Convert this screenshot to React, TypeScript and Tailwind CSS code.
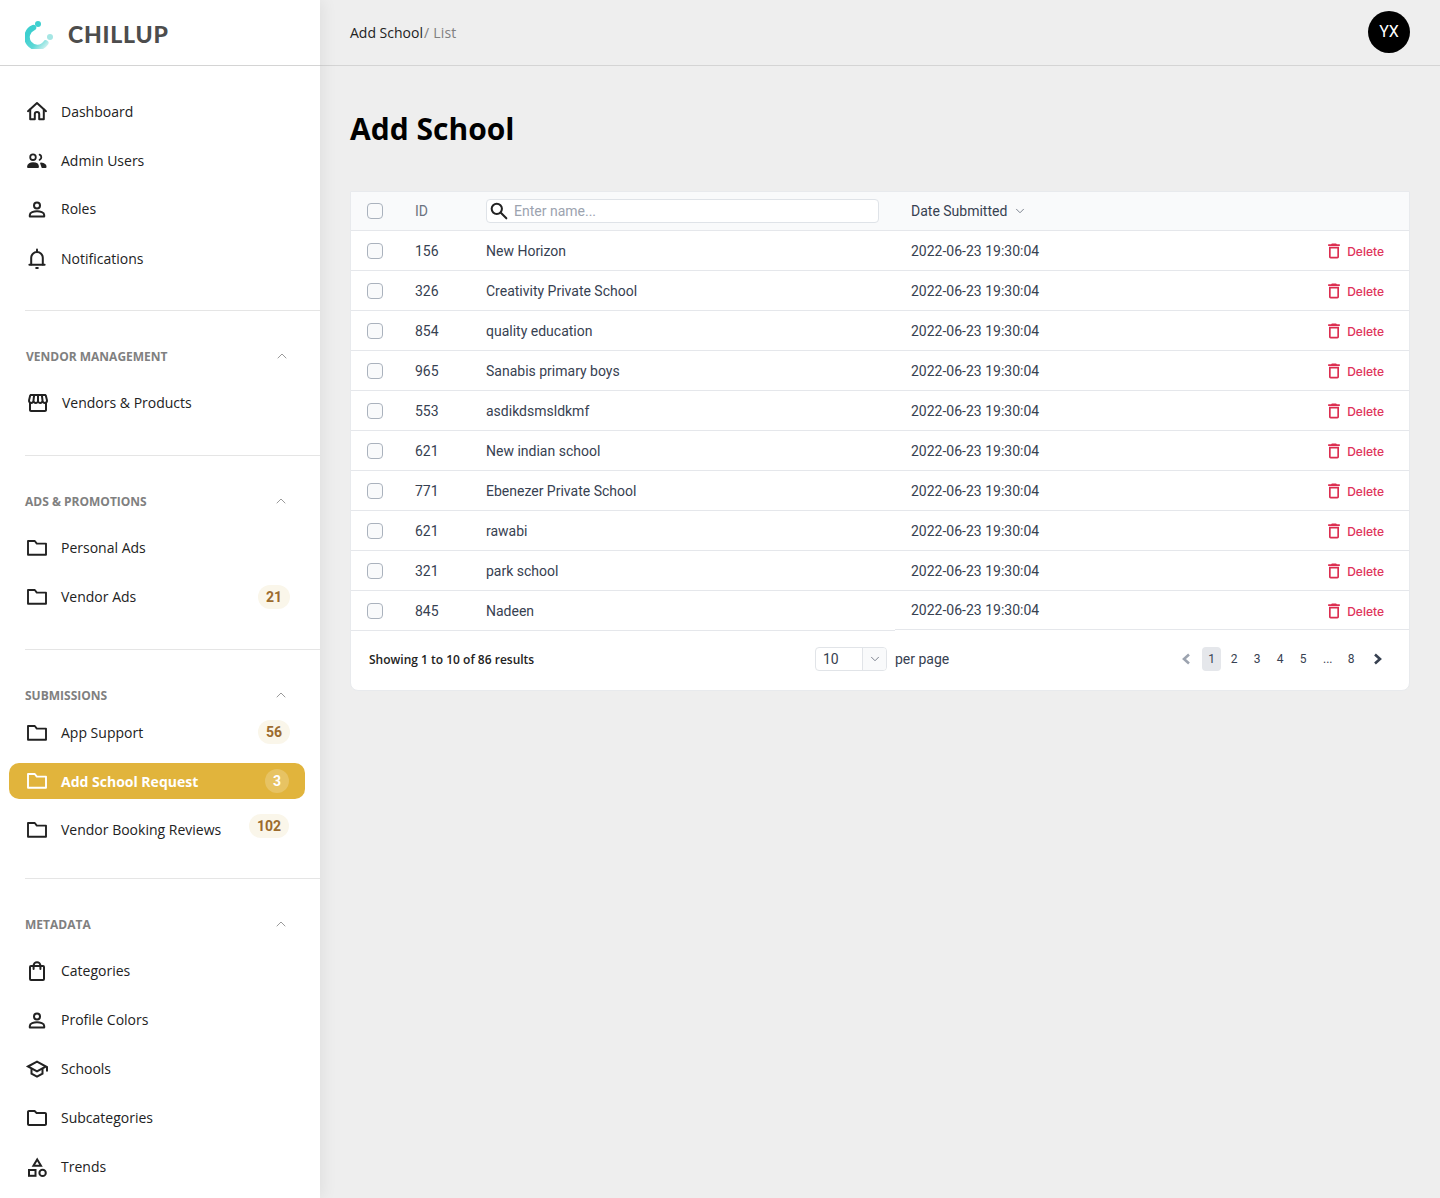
import React from "react";
import { MdOutlineStorefront, MdOutlineFolder, MdOutlineDelete } from "react-icons/md";
import { ChevronUp, ChevronDown } from "lucide-react";

type IconT = React.ComponentType<{ className?: string }>;

const base = {
  viewBox: "0 0 24 24",
  fill: "none",
  stroke: "currentColor",
  strokeWidth: 2,
  strokeLinecap: "round" as const,
  strokeLinejoin: "round" as const,
};

function HomeIcon({ className }: { className?: string }) {
  return (
    <svg {...base} className={className}>
      <path d="M3 11.2 12 3l9 8.2" />
      <path d="M5.2 9.6V19.3h4.6v-5.2a2.2 2.2 0 0 1 4.4 0v5.2h4.6V9.6" />
    </svg>
  );
}
function PeopleIcon({ className }: { className?: string }) {
  return (
    <svg {...base} className={className} strokeWidth={1.8}>
      <circle cx="8" cy="8.2" r="2.8" />
      <path d="M3 17.6c0-2.3 2.6-3.4 5-3.4s5 1.1 5 3.4v.5H3z" fill="currentColor" />
      <path d="M14.6 5.6a2.9 2.9 0 0 1 0 5.3" />
      <path d="M16 14.3c2.3.3 4.6 1.3 4.6 3.3v.5h-3.2z" fill="currentColor" />
    </svg>
  );
}
function PersonIcon({ className }: { className?: string }) {
  return (
    <svg {...base} className={className}>
      <circle cx="12" cy="8.6" r="3" />
      <path d="M4.8 19.5v-1.6c0-2.5 4-3.7 7.2-3.7s7.2 1.2 7.2 3.7v1.6z" />
    </svg>
  );
}
function BellIcon({ className }: { className?: string }) {
  return (
    <svg {...base} className={className}>
      <path d="M12 2.5v1.8" />
      <path d="M6.2 17.6v-6.8a5.8 5.8 0 0 1 11.6 0v6.8" />
      <path d="M4.4 17.8h15.2" />
      <path d="M11.2 21h1.6" />
    </svg>
  );
}
function FolderIcon({ className }: { className?: string }) {
  return (
    <svg {...base} className={className} strokeWidth={1.9}>
      <path d="M3 5h6.8l2 2.6H21v11.2H3z" />
    </svg>
  );
}
function BagIcon({ className }: { className?: string }) {
  return (
    <svg {...base} className={className}>
      <rect x="5" y="7" width="14" height="14" rx="1" />
      <path d="M8.6 10V6.6a3.4 3.4 0 0 1 6.8 0V10" />
    </svg>
  );
}
function SchoolIcon({ className }: { className?: string }) {
  return (
    <svg {...base} className={className} strokeLinecap="butt" strokeLinejoin="miter">
      <path d="M3 9.5 12 4.6l9 4.9-9 4.9z" />
      <path d="M6.5 12v4.6l5.5 3 5.5-3V12" />
      <path d="M22 9.5v5" />
    </svg>
  );
}
function CategoryIcon({ className }: { className?: string }) {
  return (
    <svg {...base} className={className} strokeLinecap="butt" strokeLinejoin="miter">
      <path d="M12.2 4.4 16 10.8H8.4z" />
      <rect x="4" y="15" width="6.5" height="5.8" />
      <circle cx="17.6" cy="17.9" r="3.2" />
    </svg>
  );
}
function SearchIcon({ className }: { className?: string }) {
  return (
    <svg {...base} className={className} strokeWidth={2.2}>
      <circle cx="9.6" cy="9.6" r="5.6" />
      <path d="m14 14 6 6" />
    </svg>
  );
}
function PageLeft({ className }: { className?: string }) {
  return (
    <svg {...base} className={className} strokeWidth={2.6} strokeLinecap="butt" strokeLinejoin="miter">
      <path d="M15 7.5 10 12l5 4.5" />
    </svg>
  );
}
function PageRight({ className }: { className?: string }) {
  return (
    <svg {...base} className={className} strokeWidth={2.6} strokeLinecap="butt" strokeLinejoin="miter">
      <path d="M10 7.5 15 12l-5 4.5" />
    </svg>
  );
}

function Logo() {
  return (
    <svg width="32" height="32" viewBox="0 0 32 32" className="mt-px ml-px shrink-0">
      <defs>
        <linearGradient id="lg" x1="0.2" y1="0.2" x2="1" y2="1">
          <stop offset="0" stopColor="#3dcfcf" />
          <stop offset="0.55" stopColor="#5ed8d6" />
          <stop offset="1" stopColor="#cdf1ef" />
        </linearGradient>
      </defs>
      <path d="M8.5 10.6 A10.3 10.3 0 1 0 20.8 26" fill="none" stroke="url(#lg)" strokeWidth="5.6" strokeLinecap="round" />
      <circle cx="13" cy="7" r="3" fill="#3fd0d0" />
      <circle cx="25" cy="20" r="3" fill="#a5e6e4" />
    </svg>
  );
}

function NavItem({
  icon: Icon,
  label,
  badge,
  active,
  className = "",
  badgeClass = "",
}: {
  icon: IconT;
  label: string;
  badge?: string;
  active?: boolean;
  className?: string;
  badgeClass?: string;
}) {
  return (
    <div
      className={
        "flex h-9 items-center " +
        (active ? "mr-[15px] ml-[9px] rounded-[10px] bg-[#e1b43c] pr-4 pl-4 text-white " : "pr-[31px] pl-[25px] text-[#222222] ") +
        className
      }
    >
      <Icon className="h-6 w-6 shrink-0" />
      <span className={"ml-3 text-sm " + (active ? "translate-y-px font-bold" : "")}>{label}</span>
      {badge && (
        <span
          className={
            "ml-auto flex h-6 items-center justify-center rounded-full font-['Roboto',sans-serif] text-sm font-bold " +
            (active ? "w-6 bg-white/20 text-white " : "min-w-8 bg-[#faf6ea] px-2 text-[#9c6b2e] ") +
            badgeClass
          }
        >
          {badge}
        </span>
      )}
    </div>
  );
}

function SectionHead({ title, shifted }: { title: string; shifted?: boolean }) {
  return (
    <div className={"mt-9 flex h-5 items-center justify-between " + (shifted ? "pr-[30px] pl-[26px]" : "pr-[31px] pl-[25px]")}>
      <span className="text-xs font-bold text-[#808080]">{title}</span>
      <ChevronUp className="h-4 w-4 -translate-y-px stroke-[1.5] text-[#9a9a9a]" />
    </div>
  );
}

function Sidebar() {
  return (
    <aside className="relative z-10 flex h-full w-80 shrink-0 flex-col overflow-hidden bg-white font-['Open_Sans',sans-serif] shadow-[4px_0_14px_rgba(0,0,0,0.06)]">
      <div className="flex h-[66px] shrink-0 items-center border-b border-[#d4d4d4] pl-6">
        <Logo />
        <span className="mt-[3px] ml-[11px] font-['Lato',sans-serif] text-[23px] font-black tracking-[0.8px] text-[#4d4d4d]">CHILLUP</span>
      </div>
      <nav className="flex flex-col">
        <NavItem icon={HomeIcon} label="Dashboard" className="mt-7" />
        <NavItem icon={PeopleIcon} label="Admin Users" className="mt-[13px]" />
        <NavItem icon={PersonIcon} label="Roles" className="mt-3" />
        <NavItem icon={BellIcon} label="Notifications" className="mt-[14px]" />
        <div className="mt-[33px] ml-[25px] h-px bg-[#e5e5e5]" />

        <SectionHead title="VENDOR MANAGEMENT" shifted />
        <NavItem icon={MdOutlineStorefront} label="Vendors & Products" className="mt-[18px] ml-px" />
        <div className="mt-[34px] ml-[25px] h-px bg-[#e5e5e5]" />

        <SectionHead title="ADS & PROMOTIONS" />
        <NavItem icon={FolderIcon} label="Personal Ads" className="mt-[18px]" />
        <NavItem icon={FolderIcon} label="Vendor Ads" badge="21" className="mt-[13px]" badgeClass="translate-x-px" />
        <div className="mt-[34px] ml-[25px] h-px bg-[#e5e5e5]" />

        <SectionHead title="SUBMISSIONS" />
        <NavItem icon={FolderIcon} label="App Support" badge="56" className="mt-[9px]" badgeClass="translate-x-px -translate-y-px" />
        <NavItem icon={FolderIcon} label="Add School Request" badge="3" active className="mt-3" />
        <NavItem icon={FolderIcon} label="Vendor Booking Reviews" badge="102" className="mt-[13px]" badgeClass="-translate-y-1" />
        <div className="mt-[30px] ml-[25px] h-px bg-[#e5e5e5]" />

        <SectionHead title="METADATA" />
        <NavItem icon={BagIcon} label="Categories" className="mt-[18px]" />
        <NavItem icon={PersonIcon} label="Profile Colors" className="mt-[13px]" />
        <NavItem icon={SchoolIcon} label="Schools" className="mt-[13px]" />
        <NavItem icon={MdOutlineFolder} label="Subcategories" className="mt-[13px]" />
        <NavItem icon={CategoryIcon} label="Trends" className="mt-[13px]" />
      </nav>
    </aside>
  );
}

const rows: [string, string][] = [
  ["156", "New Horizon"],
  ["326", "Creativity Private School"],
  ["854", "quality education"],
  ["965", "Sanabis primary boys"],
  ["553", "asdikdsmsldkmf"],
  ["621", "New indian school"],
  ["771", "Ebenezer Private School"],
  ["621", "rawabi"],
  ["321", "park school"],
  ["845", "Nadeen"],
];

function Check() {
  return <span className="block h-4 w-4 rounded border border-[#aab2bd] bg-[#f9fafb]" />;
}

function DeleteAction({ className = "" }: { className?: string }) {
  return (
    <span className={"ml-auto flex items-center pr-[25px] text-[#e0325a] " + className}>
      <MdOutlineDelete className="h-5 w-5 text-[#dc2d50]" />
      <span className="ml-[3px] translate-y-px font-['Inter',sans-serif] text-xs font-medium">Delete</span>
    </span>
  );
}

function Row({ id, name, last }: { id: string; name: string; last: boolean }) {
  if (last) {
    return (
      <div className="flex h-10 items-start">
        <div className="flex h-10 w-[544px] shrink-0 items-center border-b border-[#e5e7eb] pl-4">
          <Check />
          <span className="ml-8 w-[71px]">{id}</span>
          <span>{name}</span>
        </div>
        <div className="flex h-[39px] flex-1 items-center border-b border-[#e5e7eb] pl-4">
          <span>2022-06-23 19:30:04</span>
          <DeleteAction className="translate-y-px" />
        </div>
      </div>
    );
  }
  return (
    <div className="flex h-10 items-center border-b border-[#e5e7eb]">
      <div className="flex w-[544px] shrink-0 items-center pl-4">
        <Check />
        <span className="ml-8 w-[71px]">{id}</span>
        <span>{name}</span>
      </div>
      <span className="pl-4">2022-06-23 19:30:04</span>
      <DeleteAction />
    </div>
  );
}

function Table() {
  return (
    <div className="mt-[41px] w-[1060px] rounded-b-lg border border-[#e8eaed] bg-white font-['Roboto',sans-serif] text-sm text-[#374151]">
      <div className="flex h-[39px] items-center border-b border-[#e5e7eb] bg-[#f9fafb] pl-4">
        <Check />
        <span className="ml-8 w-[71px] text-[#6b7280]">ID</span>
        <div className="flex h-6 w-[393px] items-center rounded border border-[#dfe3e8] bg-white pl-px">
          <SearchIcon className="h-[22px] w-[22px] text-[#222222]" />
          <span className="ml-1 text-[#9ca3af]">Enter name...</span>
        </div>
        <span className="ml-8">Date Submitted</span>
        <ChevronDown className="ml-[6px] h-3.5 w-3.5 stroke-[1.5] text-[#6b7280]" />
      </div>
      {rows.map((r, i) => (
        <Row key={i} id={r[0]} name={r[1]} last={i === rows.length - 1} />
      ))}
      <div className="flex h-[59px] items-center pb-[3px] pl-[18px]">
        <span className="w-[446px] translate-y-px font-['Open_Sans',sans-serif] text-xs font-semibold text-[#222222]">Showing 1 to 10 of 86 results</span>
        <div className="flex h-6 w-[72px] overflow-hidden rounded border border-[#e1e4e8]">
          <span className="flex-1 pl-[7px] leading-[22px]">10</span>
          <span className="flex w-6 items-center justify-center border-l border-[#e1e4e8] bg-[#f9fafb]">
            <ChevronDown className="h-3.5 w-3.5 stroke-[1.5] text-[#6b7280]" />
          </span>
        </div>
        <span className="ml-2">per page</span>
        <div className="ml-auto flex items-center pr-5 text-xs">
          <PageLeft className="h-6 w-6 text-[#9ca3af]" />
          <span className="ml-1 flex h-6 w-[19px] items-center justify-center rounded bg-[#e5e7eb]">1</span>
          <span className="ml-[9px] w-2 text-center">2</span>
          <span className="ml-[15px] w-2 text-center">3</span>
          <span className="ml-[15px] w-2 text-center">4</span>
          <span className="ml-[15px] w-2 text-center">5</span>
          <span className="ml-4 w-2 text-center">...</span>
          <span className="ml-4 w-2 text-center">8</span>
          <PageRight className="ml-[10px] h-6 w-6 text-[#374151]" />
        </div>
      </div>
    </div>
  );
}

export default function App() {
  return (
    <div className="flex h-[1198px] w-[1440px] overflow-hidden bg-[#eeeeee]">
      <Sidebar />
      <main className="flex min-w-0 flex-1 flex-col">
        <header className="flex h-[66px] shrink-0 items-center justify-between border-b border-[#d4d4d4] pr-[30px] pl-[30px] font-['Open_Sans',sans-serif] text-sm">
          <div>
            <span className="text-[#222222]">Add School</span>
            <span className="ml-px tracking-[0.2px] text-[#808080]">/ List</span>
          </div>
          <div className="-mt-px flex h-[42px] w-[42px] items-center justify-center rounded-full bg-black font-['Roboto',sans-serif] text-base text-white">YX</div>
        </header>
        <div className="pl-[30px]">
          <h1 className="mt-[42px] font-['Open_Sans',sans-serif] text-[30px] leading-[42px] font-bold text-black">Add School</h1>
          <Table />
        </div>
      </main>
    </div>
  );
}
